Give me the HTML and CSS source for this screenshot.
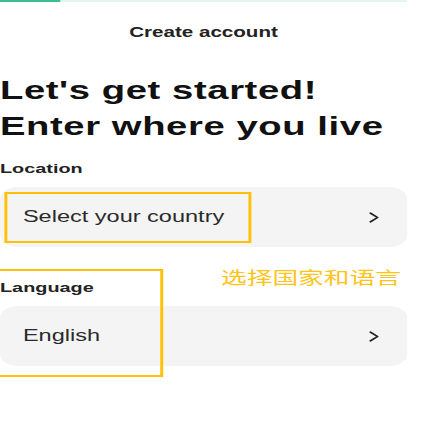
FILE: index.html
```html
<!DOCTYPE html>
<html lang="en">
<head>
<meta charset="utf-8">
<title>Create account</title>
<link rel="stylesheet" href="styles.css">
</head>
<body>
<div class="page">
  <div class="progress"><div class="progress-fill"></div></div>
  <div class="title">Create account</div>
  <h1 class="heading">Let's get started!<br>Enter where you live</h1>

  <section class="field field-location">
    <div class="label">Location</div>
    <div class="select">
      <span class="select-text">Select your country</span>
      <svg class="chev" viewBox="0 0 7 11" width="7" height="11"><path d="M1 1 L6 5.5 L1 10" fill="none" stroke="#222" stroke-width="1.5" stroke-linecap="round" stroke-linejoin="round"/></svg>
    </div>
  </section>

  <section class="field field-language">
    <div class="label">Language</div>
    <div class="select">
      <span class="select-text">English</span>
      <svg class="chev" viewBox="0 0 7 11" width="7" height="11"><path d="M1 1 L6 5.5 L1 10" fill="none" stroke="#222" stroke-width="1.5" stroke-linecap="round" stroke-linejoin="round"/></svg>
    </div>
  </section>

  <div class="note note-country"></div>
  <div class="note note-language"></div>
  <div class="note-text">选择国家和语言</div>
</div>
</body>
</html>
```

FILE: styles.css
```css
html, body {
  margin: 0;
  padding: 0;
  background: #ffffff;
  overflow: hidden;
}

.page {
  position: relative;
  width: 292.5px;
  height: 433px;
  box-sizing: border-box;
  padding-right: 15.6px;
  transform: scaleX(1.47);
  transform-origin: 0 0;
  font-family: "Liberation Sans", Arial, sans-serif;
  color: #1c1c1c;
}

.progress {
  height: 2px;
  background: #e3f6ee;
}

.progress-fill {
  width: 40.8px;
  height: 100%;
  background: #3bbf8c;
}

.title {
  margin-top: 22px;
  font-size: 14px;
  line-height: 16px;
  font-weight: 700;
  text-align: center;
  color: #222;
}

.heading {
  margin: 32px 0 0;
  font-size: 26px;
  line-height: 36px;
  font-weight: 700;
  letter-spacing: 0.4px;
  color: #111;
}

.field-location {
  margin-top: 17px;
}

.field-language {
  margin-top: 33px;
}

.label {
  font-size: 13.5px;
  line-height: 16px;
  font-weight: 700;
  color: #222;
  margin-bottom: 10px;
}

.select {
  display: flex;
  align-items: center;
  justify-content: space-between;
  height: 60px;
  box-sizing: border-box;
  padding: 0 19px 0 15.6px;
  background: #f4f4f4;
  border-radius: 12px;
}

.select-text {
  font-size: 16px;
  color: #2a2a2a;
}

.chev {
  display: block;
  width: 6.8px;
  height: 11px;
}

.note {
  position: absolute;
  box-sizing: border-box;
  border: 2.5px solid #ffc107;
}

.note-country {
  left: 2.7px;
  top: 192px;
  width: 168.7px;
  height: 51px;
}

.note-language {
  left: -5px;
  top: 269px;
  width: 115.9px;
  height: 108px;
}

.note-text {
  position: absolute;
  left: 150.3px;
  top: 268px;
  font-family: "Noto Sans CJK SC", "Noto Sans", sans-serif;
  font-size: 17.5px;
  line-height: 1;
  color: #ffc41a;
  white-space: nowrap;
}
```
